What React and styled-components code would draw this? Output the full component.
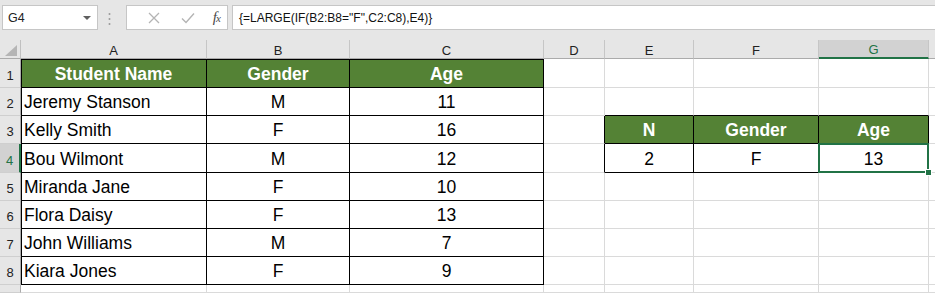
import styled, { createGlobalStyle } from 'styled-components'

const GlobalStyle = createGlobalStyle`
  html, body {
    margin: 0;
    padding: 0;
    background: #fff;
  }
  body {
    font-family: "Liberation Sans", Arial, sans-serif;
    color: #000;
  }
`

const GREEN = '#548235'
const SELECT = '#217346'
const GRIDLINE = '#dadada'

const Sheet = styled.div`
  width: 935px;
  height: 293px;
  overflow: hidden;
  background: #fff;
`

const FormulaBar = styled.div`
  display: flex;
  align-items: flex-start;
  height: 40px;
  box-sizing: border-box;
  padding: 5px 0 0 2px;
  background: #e6e6e6;
`

const NameBox = styled.div`
  width: 96px;
  height: 25px;
  box-sizing: border-box;
  display: flex;
  align-items: center;
  justify-content: space-between;
  padding: 0 6px 0 5px;
  background: #fff;
  border: 1px solid #c6c6c6;
  font-size: 12.5px;
  color: #222;
`

const Caret = styled.span`
  width: 0;
  height: 0;
  border-left: 4px solid transparent;
  border-right: 4px solid transparent;
  border-top: 4px solid #5f5f5f;
`

const Dots = styled.svg`
  margin: 7px 0 0 10px;
  flex: none;
`

const Buttons = styled.div`
  width: 102px;
  height: 25px;
  box-sizing: border-box;
  margin-left: 15px;
  display: flex;
  align-items: center;
  padding-left: 10px;
  background: #fff;
  border: 1px solid #c6c6c6;
`

const IconSlot = styled.span`
  width: ${(p) => p.$w}px;
  display: flex;
  justify-content: center;
  align-items: center;
`

const Fx = styled.i`
  font-family: "Liberation Serif", serif;
  font-size: 15px;
  color: #4a4a4a;
  letter-spacing: -1px;

  & > small {
    font-size: 11px;
  }
`

const FormulaInput = styled.div`
  flex: 1;
  height: 25px;
  box-sizing: border-box;
  margin-left: 4px;
  display: flex;
  align-items: center;
  padding-left: 6px;
  background: #fff;
  border: 1px solid #c6c6c6;
  border-right: none;
  font-size: 12px;
  color: #111;
  white-space: nowrap;
`

const Grid = styled.div`
  display: grid;
  grid-template-columns: 21px 186px 143px 194px 61px 89px 125px 110px 1fr;
  grid-template-rows: 19px 29px 28px 28px 29px 28px 28px 28px 28px 1fr;
  height: 253px;
`

const Corner = styled.div`
  background: #e6e6e6;
  border-right: 1px solid #c0c0c0;
  border-bottom: 1px solid #ababab;
  box-sizing: border-box;
  position: relative;

  & > svg {
    position: absolute;
    left: 5px;
    top: 5px;
  }
`

const ColHead = styled.div`
  box-sizing: border-box;
  display: flex;
  align-items: center;
  justify-content: center;
  padding-top: 2px;
  font-size: 13px;
  color: ${(p) => (p.$active ? SELECT : '#222')};
  background: ${(p) => (p.$active ? '#d2d2d2' : '#e6e6e6')};
  border-right: 1px solid #c6c6c6;
  border-bottom: ${(p) => (p.$active ? `2px solid ${SELECT}` : '1px solid #ababab')};
`

const RowHead = styled.div`
  box-sizing: border-box;
  display: flex;
  align-items: flex-end;
  justify-content: center;
  padding-bottom: 4px;
  font-size: 13px;
  color: ${(p) => (p.$active ? SELECT : '#222')};
  background: ${(p) => (p.$active ? '#d2d2d2' : '#e6e6e6')};
  border-bottom: 1px solid #cfcfcf;
  border-right: ${(p) => (p.$active ? `2px solid ${SELECT}` : '1px solid #ababab')};
`

const Cell = styled.div`
  box-sizing: border-box;
  position: relative;
  z-index: ${(p) => (p.$selected ? 2 : 0)};
  display: flex;
  align-items: flex-end;
  justify-content: ${(p) => (p.$align === 'left' ? 'flex-start' : 'center')};
  padding: 0 3px 2px;
  white-space: nowrap;
  font-size: 17.5px;
  font-weight: ${(p) => (p.$head ? 700 : 400)};
  color: ${(p) => (p.$head ? '#fff' : '#000')};
  background: ${(p) => (p.$head ? GREEN : '#fff')};
  border-right: 1px solid ${(p) => p.$rb};
  border-bottom: 1px solid ${(p) => p.$bb};
  box-shadow: ${(p) =>
    [p.$edgeLeft && 'inset 1px 0 0 #000', p.$edgeTop && 'inset 0 1px 0 #000']
      .filter(Boolean)
      .join(', ') || 'none'};
`

const Selection = styled.div`
  position: absolute;
  top: -1px;
  left: -1px;
  right: -1px;
  bottom: -1px;
  border: 2px solid ${SELECT};
  pointer-events: none;
`

const FillHandle = styled.span`
  position: absolute;
  right: -5px;
  bottom: -5px;
  width: 5px;
  height: 5px;
  background: ${SELECT};
  border: 1px solid #fff;
`

const columns = ['A', 'B', 'C', 'D', 'E', 'F', 'G', '']

const students = [
  ['Jeremy Stanson', 'M', '11'],
  ['Kelly Smith', 'F', '16'],
  ['Bou Wilmont', 'M', '12'],
  ['Miranda Jane', 'F', '10'],
  ['Flora Daisy', 'F', '13'],
  ['John Williams', 'M', '7'],
  ['Kiara Jones', 'F', '9'],
]

// values keyed by "row:col" (col 0 = A)
const values = {}
;['Student Name', 'Gender', 'Age'].forEach((v, c) => (values[`1:${c}`] = { v, head: true }))
students.forEach((s, i) =>
  s.forEach((v, c) => (values[`${i + 2}:${c}`] = { v, align: c === 0 ? 'left' : 'center' }))
)
;['N', 'Gender', 'Age'].forEach((v, i) => (values[`3:${i + 4}`] = { v, head: true }))
;['2', 'F', '13'].forEach((v, i) => (values[`4:${i + 4}`] = { v }))

const tables = [
  { r1: 1, r2: 8, c1: 0, c2: 2 },
  { r1: 3, r2: 4, c1: 4, c2: 6 },
]

const inTable = (r, c) => tables.some((t) => r >= t.r1 && r <= t.r2 && c >= t.c1 && c <= t.c2)

const ACTIVE_ROW = 4
const ACTIVE_COL = 6
const LAST_LABELLED_ROW = 8

const CornerMark = () => (
  <svg width="12" height="11" viewBox="0 0 12 11">
    <polygon points="12,0 12,11 0,11" fill="#b5b5b5" />
  </svg>
)

const CancelIcon = () => (
  <svg width="12" height="12" viewBox="0 0 12 12">
    <path d="M1 1 L11 11 M11 1 L1 11" stroke="#b4b4b4" strokeWidth="1.3" fill="none" />
  </svg>
)

const EnterIcon = () => (
  <svg width="14" height="12" viewBox="0 0 14 12">
    <path d="M1 6.5 L5 10.5 L13 1.5" stroke="#b4b4b4" strokeWidth="1.4" fill="none" />
  </svg>
)

const App = () => {
  const rows = [1, 2, 3, 4, 5, 6, 7, 8, 9]

  return (
    <Sheet>
      <GlobalStyle />
      <FormulaBar>
        <NameBox>
          G4
          <Caret />
        </NameBox>
        <Dots width="3" height="14" viewBox="0 0 3 14">
          <circle cx="1.5" cy="2" r="1" fill="#9a9a9a" />
          <circle cx="1.5" cy="7" r="1" fill="#9a9a9a" />
          <circle cx="1.5" cy="12" r="1" fill="#9a9a9a" />
        </Dots>
        <Buttons>
          <IconSlot $w={34}><CancelIcon /></IconSlot>
          <IconSlot $w={36}><EnterIcon /></IconSlot>
          <IconSlot $w={22}>
            <Fx>f<small>x</small></Fx>
          </IconSlot>
        </Buttons>
        <FormulaInput>{'{=LARGE(IF(B2:B8="F",C2:C8),E4)}'}</FormulaInput>
      </FormulaBar>

      <Grid>
        <Corner>
          <CornerMark />
        </Corner>
        {columns.map((name, c) => (
          <ColHead key={`h${c}`} $active={c === ACTIVE_COL}>
            {name}
          </ColHead>
        ))}
        {rows.map((r) => [
          <RowHead key={`r${r}`} $active={r === ACTIVE_ROW}>
            {r <= LAST_LABELLED_ROW ? r : null}
          </RowHead>,
          ...columns.map((_, c) => {
            const cell = values[`${r}:${c}`]
            const selected = r === ACTIVE_ROW && c === ACTIVE_COL
            return (
              <Cell
                key={`${r}:${c}`}
                $head={cell?.head}
                $align={cell?.align}
                $selected={selected}
                $rb={inTable(r, c) || inTable(r, c + 1) ? '#000' : GRIDLINE}
                $bb={inTable(r, c) || inTable(r + 1, c) ? '#000' : GRIDLINE}
                $edgeLeft={c === 0 && inTable(r, 0)}
                $edgeTop={r === 1 && inTable(1, c)}
              >
                {cell?.v}
                {selected && (
                  <Selection>
                    <FillHandle />
                  </Selection>
                )}
              </Cell>
            )
          }),
        ])}
      </Grid>
    </Sheet>
  )
}

export default App
